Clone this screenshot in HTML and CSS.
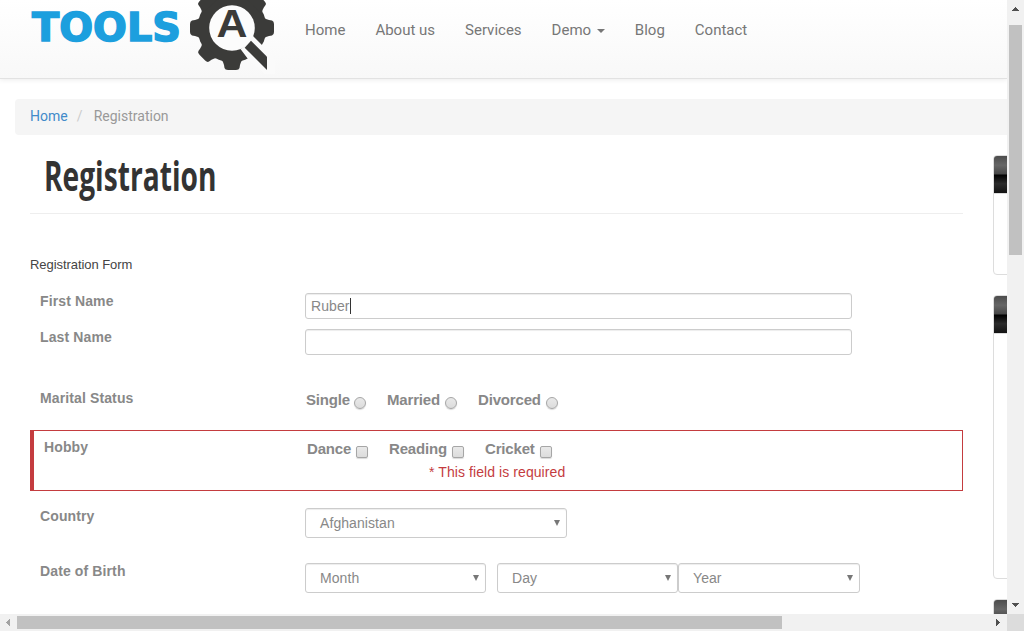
FILE: index.html
```
<!DOCTYPE html>
<html lang="en">
<head>
<meta charset="utf-8">
<title>Registration</title>
<link rel="stylesheet" href="styles.css">
</head>
<body>
<div class="window">
  <div class="page">
    <header class="header">
      <svg class="logo" width="250" height="74" viewBox="0 0 250 74" role="img" aria-label="Tools QA">
        <text class="logo-word" x="7" y="41" textLength="149" lengthAdjust="spacingAndGlyphs">TOOLS</text>
        <g transform="translate(207 28)">
          <g fill="#3b3b39">
            <circle r="34.500"/>
            <path id="tooth" d="M-11 -31Q-8.500 -34 -8 -37L-7.500 -40Q-7 -42 -4 -42H4Q7 -42 7.500 -40L8 -37Q8.500 -34 11 -31Z"/>
            <use href="#tooth" transform="rotate(45)"/>
            <use href="#tooth" transform="rotate(90)"/>
            <use href="#tooth" transform="rotate(180)"/>
            <use href="#tooth" transform="rotate(225)"/>
            <use href="#tooth" transform="rotate(270)"/>
            <use href="#tooth" transform="rotate(315)"/>
          </g>
          <circle r="22.800" fill="#fcfcfc"/>
          <path d="M8.500 21L14 17L21 8L31 18L44 33V50H37L16 31Z" fill="#fafafa"/>
          <path d="M12.700 19.700L19 12.700L35 28.700V42Z" fill="#3b3b39"/>
          <text class="logo-mark" x="-15.500" y="9" textLength="31" lengthAdjust="spacingAndGlyphs">A</text>
        </g>
      </svg>
      <nav class="nav">
        <a>Home</a><a>About us</a><a>Services</a><a>Demo <i class="caret"></i></a><a>Blog</a><a>Contact</a>
      </nav>
    </header>

    <div class="breadcrumb"><a>Home</a><span class="slash">/</span><span>Registration</span></div>

    <div class="columns">
      <main class="main">
        <h1 class="title"><span class="title-text">Registration</span></h1>
        <p class="intro">Registration Form</p>
        <form class="form">
          <div class="row row-text"><label class="label">First Name</label><div class="input">Ruber<i class="cursor"></i></div></div>
          <div class="row row-text"><label class="label">Last Name</label><div class="input"></div></div>
          <div class="row row-marital">
            <span class="label">Marital Status</span>
            <div class="options">
              <label class="option single">Single<i class="tick round"></i></label>
              <label class="option married">Married<i class="tick round"></i></label>
              <label class="option divorced">Divorced<i class="tick round"></i></label>
            </div>
          </div>
          <div class="row row-error">
            <span class="label">Hobby</span>
            <div>
              <div class="options">
                <label class="option dance">Dance<i class="tick"></i></label>
                <label class="option reading">Reading<i class="tick"></i></label>
                <label class="option cricket">Cricket<i class="tick"></i></label>
              </div>
              <div class="error">* This field is required</div>
            </div>
          </div>
          <div class="row row-country"><label class="label">Country</label><div class="select country">Afghanistan<i class="arrow"></i></div></div>
          <div class="row">
            <label class="label">Date of Birth</label>
            <div class="select month">Month<i class="arrow"></i></div>
            <div class="select day">Day<i class="arrow"></i></div>
            <div class="select year">Year<i class="arrow"></i></div>
          </div>
        </form>
      </main>
      <aside class="sidebar">
        <section class="widget short"><div class="widget-head"></div></section>
        <section class="widget tall"><div class="widget-head"></div></section>
        <section class="widget short"><div class="widget-head"></div></section>
      </aside>
    </div>
  </div>

  <div class="vbar">
    <svg width="17" height="17" shape-rendering="crispEdges"><path d="M5 11H12V10H11V9H10V8H9V7H8V8H7V9H6V10H5Z" fill="#505050"/></svg>
    <div class="vthumb"></div>
    <svg class="end" width="17" height="17" shape-rendering="crispEdges"><path d="M5 6H12V7H11V8H10V9H9V10H8V9H7V8H6V7H5Z" fill="#505050"/></svg>
  </div>
  <div class="hbar">
    <svg width="17" height="17" shape-rendering="crispEdges"><path d="M10 5V12H9V11H8V10H7V9H6V8H7V7H8V6H9V5Z" fill="#a3a3a3"/></svg>
    <div class="hthumb"></div>
    <svg class="end" width="17" height="17" shape-rendering="crispEdges"><path d="M6 5V12H7V11H8V10H9V9H10V8H9V7H8V6H7V5Z" fill="#505050"/></svg>
  </div>
  <div class="corner"></div>
</div>
</body>
</html>
```
FILE: styles.css
```
* { box-sizing: border-box; }
body { margin: 0; background: #fff; font-family: "Liberation Sans", Arial, sans-serif; }

.window { display: grid; grid-template: 614px 17px / 1007px 17px; width: 1024px; height: 631px; overflow: hidden; }
.page { overflow: hidden; }

.header { display: flex; height: 79px; background: linear-gradient(#fff, #f8f8f8); border-bottom: 1px solid #e2e2e2; box-shadow: 0 1px 5px rgba(0, 0, 0, .08); }
.logo { flex: none; margin-left: 25px; }
.logo-word { font: bold 39px "DejaVu Sans", sans-serif; fill: #1c9fde; stroke: #1c9fde; stroke-width: 1.5px; }
.logo-mark { font: bold 38px "Liberation Sans", Arial, sans-serif; fill: #3b3b39; }
.nav { display: flex; gap: 30px; height: 20px; margin: 20px 0 0 30px; font: 15px/20px Roboto, sans-serif; color: #777; white-space: nowrap; }
.caret { display: inline-block; margin-left: 2px; vertical-align: middle; border: 4px solid transparent; border-top-color: #777; border-bottom: 0; }

.breadcrumb { height: 36px; margin: 20px 0 0 15px; padding-left: 15px; border-radius: 4px 0 0 4px; background: #f5f5f5; color: #999; font: 14px/35px Roboto, sans-serif; }
.breadcrumb a { color: #428bca; }
.slash { display: inline-block; width: 26px; padding-left: 9px; color: #ccc; }

.columns { display: flex; gap: 30px; padding-left: 30px; }
.main { flex: none; width: 933px; }
.title { height: 79px; margin: 0; padding: 10px 0 0 14px; border-bottom: 1px solid #eee; font: 700 42px/60px "Open Sans", sans-serif; color: #333; }
.title-text { display: inline-block; transform: scaleX(.67); transform-origin: 0 0; }
.intro { height: 20px; margin: 41px 0 18px; font-size: 13px; line-height: 20px; letter-spacing: -.06px; color: #444; }

.form { font-size: 14px; letter-spacing: .08px; color: #888; }
.row { display: flex; align-items: flex-start; }
.label { flex: none; width: 275px; padding-left: 10px; font-weight: bold; line-height: 16px; letter-spacing: .12px; }
.row-text { margin-bottom: 10px; }
.input { width: 547px; height: 26px; padding-left: 5px; border: 1px solid #ccc; border-radius: 3px; box-shadow: inset 0 1px 1px rgba(0, 0, 0, .075); line-height: 24px; }
.cursor { display: inline-block; width: 1px; height: 16px; background: #333; vertical-align: -3px; }
.row-marital { height: 40px; margin-top: 35px; }
.options { display: flex; gap: 21px; padding-left: 1px; font-weight: bold; font-size: 15px; line-height: 20px; letter-spacing: -.17px; }
.option { display: flex; justify-content: space-between; }
.single { width: 60px; }
.married { width: 70px; }
.divorced { width: 80px; }
.dance { width: 61px; }
.reading { width: 75px; }
.cricket { width: 67px; }
.tick { flex: none; width: 12px; height: 12px; margin-top: 7px; border: 1px solid #a6a6a6; border-radius: 2px; background: linear-gradient(#e9e9e9, #dcdcdc); box-shadow: 0 1px 1px rgba(0, 0, 0, .15); }
.tick.round { border-radius: 50%; }
.row-error { height: 61px; padding-top: 8px; border: 1px solid #c43c3f; border-left-width: 4px; }
.row-error .label { width: 272px; }
.error { padding-left: 123px; line-height: 26px; color: #c43c3f; }
.row-country { margin: 17px 0 25px; }
.select { display: flex; align-items: center; justify-content: space-between; flex: none; height: 30px; padding: 0 6px 0 14px; border: 1px solid #ccc; border-radius: 3px; box-shadow: inset 0 1px 1px rgba(0, 0, 0, .075); }
.arrow { border: 3px solid transparent; border-top: 6px solid #777; border-bottom: 0; }
.country { width: 262px; }
.month { width: 181px; margin-right: 11px; }
.day { width: 181px; }
.year { width: 182px; }

.sidebar { flex: none; width: 300px; padding-top: 20px; }
.widget { margin-bottom: 20px; border: 1px solid #ddd; border-radius: 4px; overflow: hidden; }
.short { height: 120px; }
.tall { height: 284px; }
.widget-head { height: 38px; border-bottom: 1px solid #ddd; background: linear-gradient(#4c4c4c 0, #666 25%, #474747 49%, #000 51%, #2c2c2c 75%, #131313 100%); }

.vbar, .hbar { display: flex; background: #f1f1f1; }
.vbar { flex-direction: column; }
.vbar svg, .hbar svg { flex: none; display: block; }
.vthumb { width: 13px; height: 230px; margin: 8px 0 0 2px; background: #c1c1c1; }
.hthumb { width: 765px; height: 13px; margin-top: 2px; background: #c1c1c1; }
.vbar .end { margin-top: auto; }
.hbar .end { margin-left: auto; }
.corner { background: #dcdcdc; }
```
